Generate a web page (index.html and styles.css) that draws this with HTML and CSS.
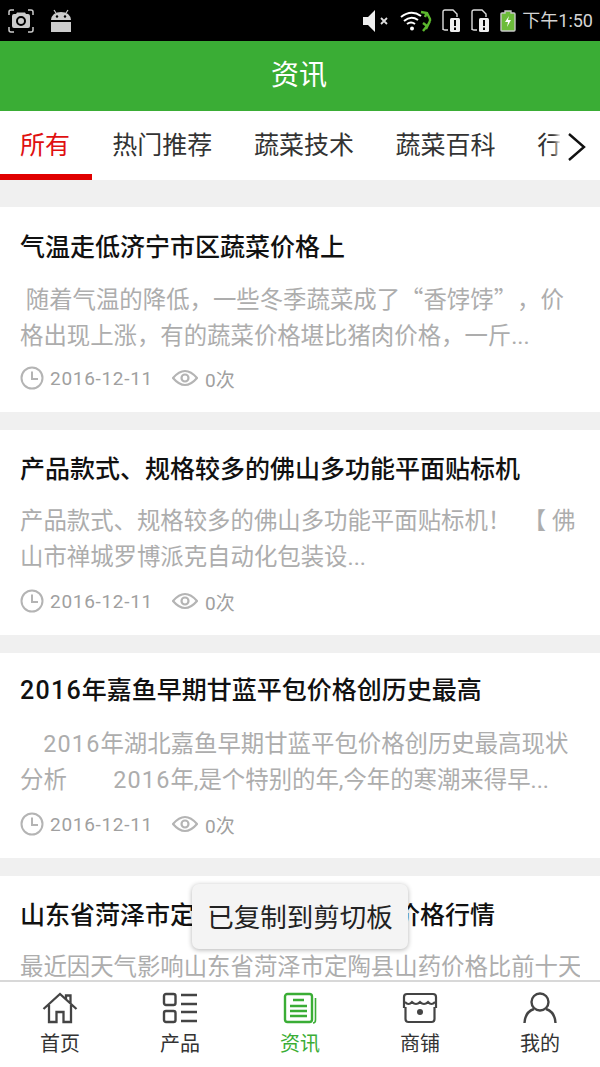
FILE: index.html
```html
<!DOCTYPE html>
<html lang="zh-CN">
<head>
<meta charset="UTF-8">
<title>资讯</title>
<link rel="stylesheet" href="styles.css">
</head>
<body>
<div class="app">

  <div class="statusbar">
    <div class="status-left">
      <svg width="26" height="24" viewBox="0 0 26 24">
        <path d="M1 6V3Q1 1 3 1H6M20 1H23Q25 1 25 3V6M25 18V21Q25 23 23 23H20M6 23H3Q1 23 1 21V18" fill="none" stroke="#ccc" stroke-width="1.5"/>
        <path d="M4 7Q4 5 6 5H8L9 3.500H17L18 5H20Q22 5 22 7V17Q22 19 20 19H6Q4 19 4 17Z" fill="#ccc"/>
        <circle cx="13" cy="12" r="4" fill="none" stroke="#000" stroke-width="2"/>
      </svg>
      <svg width="20" height="24" viewBox="0 0 20 24">
        <path d="M3 1L5 4M17 1L15 4" stroke="#ccc" stroke-width="1.2"/>
        <path d="M0 11Q1 3 10 3Q19 3 20 11Z" fill="#ccc"/>
        <circle cx="6" cy="7.500" r="1.200" fill="#000"/>
        <circle cx="14" cy="7.500" r="1.200" fill="#000"/>
        <rect x="0" y="13" width="20" height="10" fill="#ccc"/>
      </svg>
    </div>
    <div class="status-right">
      <svg class="st-speaker" width="26" height="22" viewBox="0 0 26 22">
        <path d="M1 7H6L13 0V22L6 15H1Z" fill="#eee"/>
        <path d="M19 8L25 14M25 8L19 14" stroke="#ddd" stroke-width="1.800"/>
      </svg>
      <svg width="32" height="22" viewBox="0 0 32 22">
        <path d="M1 7Q11 -1 21 6M4 11Q11 5 18 10M7 14Q11 11 15 14" fill="none" stroke="#fff" stroke-width="2"/>
        <circle cx="12" cy="18.500" r="2" fill="#fff"/>
        <path d="M21 2L27 3 30 9 30 11M23 21L27 16 23 13M27 2L25 7M30 11L26 19" fill="none" stroke="#5cb82e" stroke-width="2.400"/>
      </svg>
      <svg width="19" height="23" viewBox="0 0 19 23">
        <path d="M1 21V3Q1 1 3 1H11L15 5V8M6 21H3Q1 21 1 19" fill="none" stroke="#ddd" stroke-width="1.400"/>
        <rect x="8" y="9" width="10" height="14" rx="1.500" fill="#eee"/>
        <rect x="12" y="11" width="2" height="6" fill="#000"/>
        <rect x="12" y="18.500" width="2" height="2.500" fill="#000"/>
      </svg>
      <svg width="19" height="23" viewBox="0 0 19 23">
        <path d="M1 21V3Q1 1 3 1H11L15 5V8M6 21H3Q1 21 1 19" fill="none" stroke="#ddd" stroke-width="1.400"/>
        <rect x="8" y="9" width="10" height="14" rx="1.500" fill="#eee"/>
        <rect x="12" y="11" width="2" height="6" fill="#000"/>
        <rect x="12" y="18.500" width="2" height="2.500" fill="#000"/>
      </svg>
      <svg width="16" height="22" viewBox="0 0 16 22">
        <path d="M5 1H11V3H14Q15 3 15 4V20Q15 21 14 21H2Q1 21 1 20V4Q1 3 2 3H5Z" fill="#6cbc3a" stroke="#c8c8c8" stroke-width="1.400"/>
        <path d="M9 6L5 12H8L7 17L11 10H8Z" fill="#fff"/>
      </svg>
      <span class="clock">下午1:50</span>
    </div>
  </div>

  <div class="titlebar">资讯</div>

  <div class="tabs">
    <div class="tab active">所有</div>
    <div class="tab">热门推荐</div>
    <div class="tab">蔬菜技术</div>
    <div class="tab">蔬菜百科</div>
    <div class="tab">行业资讯</div>
    <div class="tab-more">
      <svg width="20" height="30" viewBox="0 0 20 30"><path d="M2 2L17 15L2 28" fill="none" stroke="#111" stroke-width="2.400"/></svg>
    </div>
  </div>

  <div class="list">
    <div class="card">
      <div class="card-title title-low">气温走低济宁市区蔬菜价格上</div>
      <div class="card-text">&nbsp;随着气温的降低，一些冬季蔬菜成了<span class="quote open">“</span>香饽饽<span class="quote">”</span>，价<br>格出现上涨，有的蔬菜价格堪比猪肉价格，一斤...</div>
      <div class="meta">
        <svg class="ic-clock" width="24" height="24" viewBox="0 0 24 24"><circle cx="12" cy="12" r="10.500" fill="none" stroke="#b4b4b4" stroke-width="2"/><path d="M12 5.500V13H18" fill="none" stroke="#b4b4b4" stroke-width="2"/></svg>
        <span class="date">2016-12-11</span>
        <svg class="ic-eye" width="26" height="18" viewBox="0 0 26 18"><path d="M1 9Q13 -5 25 9Q13 23 1 9Z" fill="none" stroke="#b4b4b4" stroke-width="2.200"/><circle cx="13" cy="9" r="3.500" fill="none" stroke="#b4b4b4" stroke-width="2.200"/></svg>
        <span>0次</span>
      </div>
    </div>

    <div class="card">
      <div class="card-title">产品款式、规格较多的佛山多功能平面贴标机</div>
      <div class="card-text">产品款式、规格较多的佛山多功能平面贴标机！&nbsp;&nbsp;【 佛<br>山市禅城罗博派克自动化包装设...</div>
      <div class="meta">
        <svg class="ic-clock" width="24" height="24" viewBox="0 0 24 24"><circle cx="12" cy="12" r="10.500" fill="none" stroke="#b4b4b4" stroke-width="2"/><path d="M12 5.500V13H18" fill="none" stroke="#b4b4b4" stroke-width="2"/></svg>
        <span class="date">2016-12-11</span>
        <svg class="ic-eye" width="26" height="18" viewBox="0 0 26 18"><path d="M1 9Q13 -5 25 9Q13 23 1 9Z" fill="none" stroke="#b4b4b4" stroke-width="2.200"/><circle cx="13" cy="9" r="3.500" fill="none" stroke="#b4b4b4" stroke-width="2.200"/></svg>
        <span>0次</span>
      </div>
    </div>

    <div class="card">
      <div class="card-title title-high"><span class="num">2016</span>年嘉鱼早期甘蓝平包价格创历史最高</div>
      <div class="card-text">&nbsp;&nbsp;&nbsp;&nbsp;<span class="num">2016</span>年湖北嘉鱼早期甘蓝平包价格创历史最高现状<br>分析&nbsp;&nbsp;&nbsp;&nbsp;&nbsp;&nbsp;&nbsp;&nbsp;<span class="num">2016</span>年,是个特别的年,今年的寒潮来得早...</div>
      <div class="meta">
        <svg class="ic-clock" width="24" height="24" viewBox="0 0 24 24"><circle cx="12" cy="12" r="10.500" fill="none" stroke="#b4b4b4" stroke-width="2"/><path d="M12 5.500V13H18" fill="none" stroke="#b4b4b4" stroke-width="2"/></svg>
        <span class="date">2016-12-11</span>
        <svg class="ic-eye" width="26" height="18" viewBox="0 0 26 18"><path d="M1 9Q13 -5 25 9Q13 23 1 9Z" fill="none" stroke="#b4b4b4" stroke-width="2.200"/><circle cx="13" cy="9" r="3.500" fill="none" stroke="#b4b4b4" stroke-width="2.200"/></svg>
        <span>0次</span>
      </div>
    </div>

    <div class="card">
      <div class="card-title">山东省菏泽市定陶县山药最新批发价格行情</div>
      <div class="card-text">最近因天气影响山东省菏泽市定陶县山药价格比前十天</div>
    </div>
  </div>

  <div class="toast">已复制到剪切板</div>

  <div class="tabbar">
    <div class="tabbar-item">
      <svg width="36" height="32" viewBox="0 0 36 32"><path d="M1.500 17L18 2L34.500 17M24 7V3.500H28.500V11M7 13V30H14.500V20H21.500V30H29V13" fill="none" stroke="#444" stroke-width="2.300"/></svg>
      <span>首页</span>
    </div>
    <div class="tabbar-item">
      <svg width="36" height="32" viewBox="0 0 36 32">
        <rect x="2" y="2" width="11.500" height="11" rx="2" fill="none" stroke="#444" stroke-width="2.400"/>
        <rect x="2" y="19" width="11.500" height="11" rx="2" fill="none" stroke="#444" stroke-width="2.400"/>
        <path d="M19 3H35M19 12H35M19 20H35M19 29H35" stroke="#444" stroke-width="2.400"/>
      </svg>
      <span>产品</span>
    </div>
    <div class="tabbar-item current">
      <svg width="36" height="32" viewBox="0 0 36 32">
        <rect x="3" y="2" width="27" height="28" rx="2.500" fill="none" stroke="#3aad35" stroke-width="2.400"/>
        <path d="M33.500 6V28Q33.500 31 31 31" fill="none" stroke="#3aad35" stroke-width="1.600"/>
        <path d="M11 8H22M8 14H25M8 19H25M8 24H25" stroke="#3aad35" stroke-width="2.600"/>
      </svg>
      <span>资讯</span>
    </div>
    <div class="tabbar-item">
      <svg width="36" height="32" viewBox="0 0 36 32">
        <path d="M3 15H2V5Q2 2 5 2H31Q34 2 34 5V15H33M3.500 15V27Q3.500 30 6.500 30H29.500Q32.500 30 32.500 27V15" fill="none" stroke="#444" stroke-width="2.200"/>
        <path d="M3 10Q6.500 14 10 10Q14 14 18 10Q22 14 26 10Q29.500 14 33 10" fill="none" stroke="#444" stroke-width="2"/>
        <circle cx="18" cy="20" r="3" fill="#444"/>
      </svg>
      <span>商铺</span>
    </div>
    <div class="tabbar-item">
      <svg width="36" height="32" viewBox="0 0 36 32">
        <circle cx="18" cy="10" r="8.500" fill="none" stroke="#444" stroke-width="2.400"/>
        <path d="M2.500 31Q3 20 12 17M33.500 31Q33 20 24 17" fill="none" stroke="#444" stroke-width="2.400"/>
      </svg>
      <span>我的</span>
    </div>
  </div>

</div>
</body>
</html>
```

FILE: styles.css
```css
* {
  box-sizing: border-box;
}

html, body {
  margin: 0;
  padding: 0;
}

body {
  font-family: Roboto, "Noto Sans CJK SC", sans-serif;
  background: #f0f0f0;
}

.app {
  position: relative;
  width: 600px;
  height: 1067px;
  display: flex;
  flex-direction: column;
  overflow: hidden;
}

/* status bar */
.statusbar {
  flex: none;
  height: 41px;
  background: #000;
  display: flex;
  align-items: center;
  justify-content: space-between;
  padding: 0 7px 0 8px;
}

.status-left {
  display: flex;
  align-items: center;
  gap: 17px;
}

.status-right {
  display: flex;
  align-items: center;
  gap: 10px;
}

.st-speaker {
  margin-right: 2px;
}

.clock {
  margin-left: -4px;
  padding-top: 1px;
  color: #d4d4d4;
  font-size: 18px;
  line-height: 24px;
}

/* header */
.titlebar {
  flex: none;
  height: 70px;
  padding-right: 2px;
  background: #3aad35;
  color: #fff;
  font-size: 28px;
  line-height: 70px;
  text-align: center;
}

/* top tabs */
.tabs {
  position: relative;
  flex: none;
  height: 69px;
  background: #fff;
  display: flex;
  overflow: hidden;
  white-space: nowrap;
}

.tab {
  flex: none;
  height: 69px;
  padding: 0 20.800px;
  font-size: 25px;
  line-height: 70px;
  color: #333;
}

.tab.active {
  width: 91.500px;
  padding-left: 20px;
  color: #e01010;
  border-bottom: 6px solid #e00000;
}

.tab-more {
  position: absolute;
  right: 0;
  top: 0;
  width: 40px;
  height: 69px;
  background: #fff;
  box-shadow: -3px 0 5px #fff;
  padding: 21px 0 0 7px;
}

/* article list */
.list {
  flex: 1;
  min-height: 0;
  overflow: hidden;
  padding-top: 27px;
}

.card {
  background: #fff;
  height: 205px;
  margin-bottom: 18px;
  padding: 20px 20px 0;
}

.card-title {
  font-size: 25px;
  line-height: 40px;
  font-weight: 500;
  color: #111;
  white-space: nowrap;
}

.title-low {
  margin: 1px 0 -1px;
}

.title-high {
  margin-top: -2px;
}

.card-text {
  margin-top: 13px;
  height: 72px;
  font-size: 23.400px;
  line-height: 36px;
  color: #adadad;
  white-space: nowrap;
  overflow: hidden;
}

.title-high + .card-text {
  margin-top: 15px;
}

.num {
  letter-spacing: 0.050em;
}

.quote {
  display: inline-block;
  width: 1em;
  font-family: "Noto Sans CJK SC", sans-serif;
}

.quote.open {
  text-align: right;
}

.meta {
  margin-top: 14px;
  height: 24px;
  display: flex;
  align-items: center;
  font-size: 19px;
  color: #a0a0a0;
}

.date {
  margin-left: 6px;
  width: 103px;
  letter-spacing: 0.700px;
  white-space: nowrap;
}

.ic-eye {
  margin: 0 7px 0 19px;
}

/* toast */
.toast {
  position: absolute;
  left: 192px;
  top: 884px;
  width: 216px;
  height: 65px;
  background: #f4f4f4;
  border-radius: 7px;
  box-shadow: 0 1px 5px rgba(0, 0, 0, 0.3);
  color: #222;
  font-size: 26.500px;
  line-height: 67px;
  text-align: center;
  white-space: nowrap;
}

/* bottom nav */
.tabbar {
  flex: none;
  height: 87px;
  background: #fff;
  border-top: 2px solid #d8d8d8;
  display: grid;
  grid-template-columns: repeat(5, 1fr);
}

.tabbar-item {
  display: flex;
  flex-direction: column;
  align-items: center;
  padding-top: 10px;
  color: #333;
  font-size: 20px;
  line-height: 30px;
}

.tabbar-item svg {
  display: block;
  margin-bottom: 5px;
}

.tabbar-item.current {
  color: #3aad35;
}
```
